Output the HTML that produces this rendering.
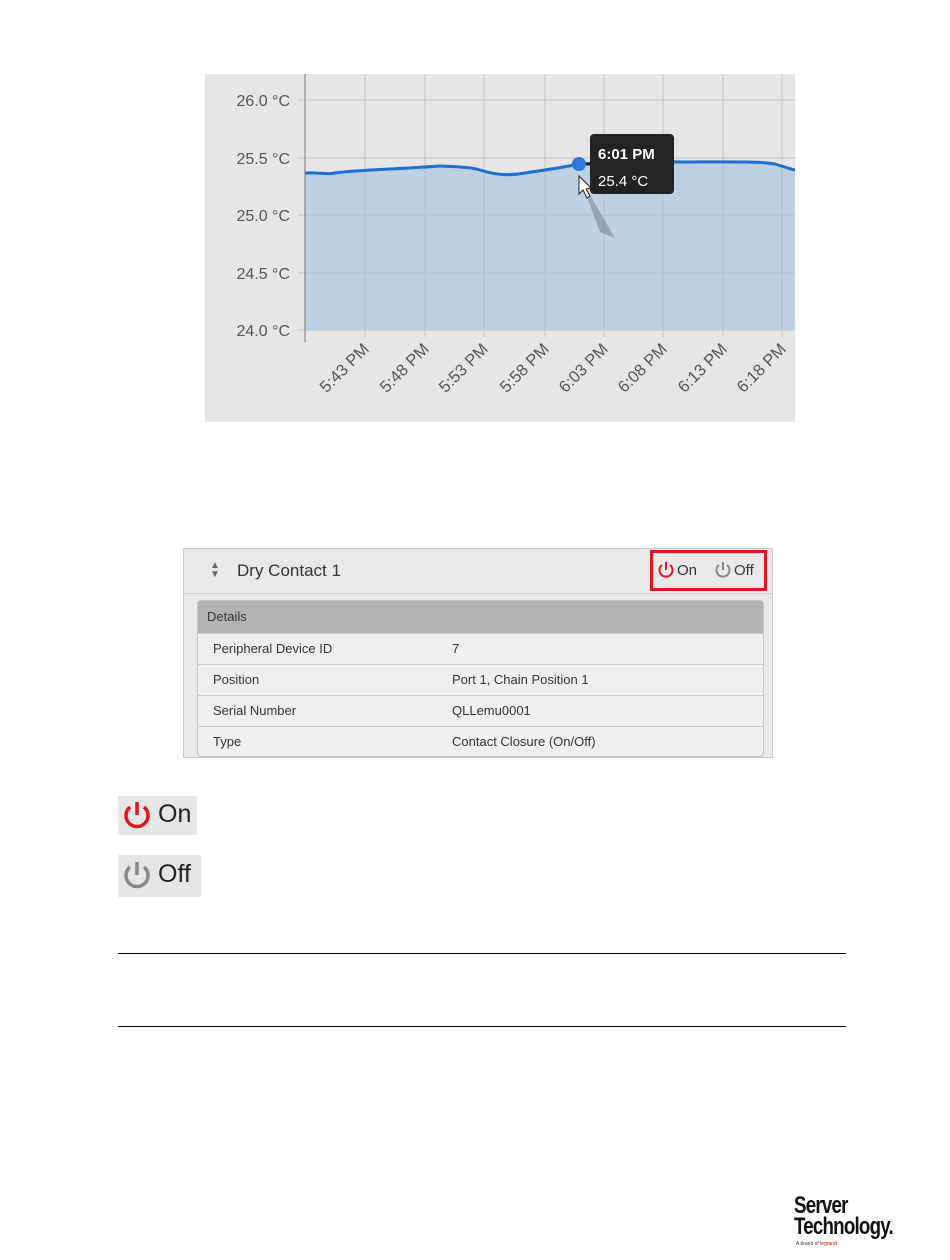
<!DOCTYPE html>
<html><head><meta charset="utf-8"><style>
body{margin:0;width:950px;height:1260px;background:#fff;position:relative;font-family:"Liberation Sans",sans-serif;overflow:hidden}
.a{position:absolute}
.row{position:absolute;left:0;right:0;height:30px;border-top:1px solid #ccc;font-size:13px;color:#333;line-height:30px}
</style></head><body>
<div class="a" style="left:205px;top:74px;width:590px;height:348px;background:#e6e6e6"></div>
<svg class="a" style="left:0;top:0" width="950" height="430">
<g stroke="#c4c4c4" stroke-width="1">
<line x1="298" y1="100" x2="795" y2="100"/><line x1="298" y1="158" x2="795" y2="158"/>
<line x1="298" y1="215" x2="795" y2="215"/><line x1="298" y1="273" x2="795" y2="273"/>
<line x1="298" y1="330" x2="795" y2="330"/>
<line x1="365" y1="74" x2="365" y2="337"/><line x1="425" y1="74" x2="425" y2="337"/>
<line x1="484" y1="74" x2="484" y2="337"/><line x1="545" y1="74" x2="545" y2="337"/>
<line x1="604" y1="74" x2="604" y2="337"/><line x1="663" y1="74" x2="663" y2="337"/>
<line x1="723" y1="74" x2="723" y2="337"/><line x1="782" y1="74" x2="782" y2="337"/>
</g>
<path d="M305,173 C320,172 325,175 335,173 C350,171 370,170 390,169 C410,168 425,167 440,166 C460,167 470,167 480,170 C495,175 510,176 525,173 C545,170 560,168 579,164 L600,163 C620,162 650,161 680,162 C720,162 760,161 775,164 C785,167 790,169 795,170 L795,330 L305,330Z" fill="#b9cde2" fill-opacity="0.9"/>
<g stroke="#a9b9cc" stroke-width="1" opacity="0.6">
<line x1="365" y1="172" x2="365" y2="330"/><line x1="425" y1="168" x2="425" y2="330"/>
<line x1="484" y1="170" x2="484" y2="330"/><line x1="545" y1="171" x2="545" y2="330"/>
<line x1="604" y1="164" x2="604" y2="330"/><line x1="663" y1="162" x2="663" y2="330"/>
<line x1="723" y1="162" x2="723" y2="330"/><line x1="782" y1="166" x2="782" y2="330"/>
<line x1="305" y1="215" x2="795" y2="215"/><line x1="305" y1="273" x2="795" y2="273"/>
</g>
<path d="M305,173 C320,172 325,175 335,173 C350,171 370,170 390,169 C410,168 425,167 440,166 C460,167 470,167 480,170 C495,175 510,176 525,173 C545,170 560,168 579,164 L600,163 C620,162 650,161 680,162 C720,162 760,161 775,164 C785,167 790,169 795,170" fill="none" stroke="#1d6fd1" stroke-width="3"/>
<line x1="305" y1="74" x2="305" y2="342" stroke="#777"/>
<line x1="579" y1="164" x2="592" y2="164" stroke="#222" stroke-width="3"/>
<circle cx="579" cy="164" r="7" fill="#2a7ad8"/>
<rect x="590" y="134" width="84" height="60" rx="4" fill="#232323"/>
<text x="598" y="159" fill="#fff" font-size="15" font-weight="bold" font-family="Liberation Sans">6:01 PM</text>
<text x="598" y="186" fill="#fff" font-size="15" font-family="Liberation Sans">25.4 °C</text>
<path d="M580,178 L600,232 L615,238 Z" fill="#555" opacity="0.35"/>
<path d="M579,176 L579,194 L583,190 L587,198 L590,196 L586,189 L591,188 Z" fill="#fff" stroke="#222" stroke-width="1"/>
<g font-size="16" fill="#555" font-family="Liberation Sans" text-anchor="end">
<text x="290" y="106">26.0 °C</text><text x="290" y="164">25.5 °C</text>
<text x="290" y="221">25.0 °C</text><text x="290" y="279">24.5 °C</text>
<text x="290" y="336">24.0 °C</text>
</g>
<g font-size="16.5" fill="#555" font-family="Liberation Sans" text-anchor="end">
<text transform="translate(370,350) rotate(-45)">5:43 PM</text>
<text transform="translate(430,350) rotate(-45)">5:48 PM</text>
<text transform="translate(489,350) rotate(-45)">5:53 PM</text>
<text transform="translate(550,350) rotate(-45)">5:58 PM</text>
<text transform="translate(609,350) rotate(-45)">6:03 PM</text>
<text transform="translate(668,350) rotate(-45)">6:08 PM</text>
<text transform="translate(728,350) rotate(-45)">6:13 PM</text>
<text transform="translate(787,350) rotate(-45)">6:18 PM</text>
</g>
</svg>

<div class="a" style="left:183px;top:548px;width:590px;height:210px;background:#e9e9e9;border:1px solid #ccc;box-sizing:border-box">
 <div class="a" style="left:0;right:0;top:0;height:44px;border-bottom:1px solid #ccc"></div>
 <div class="a" style="left:26px;top:12px;font-size:10px;color:#666;line-height:9px">▲<br>▼</div>
 <div class="a" style="left:53px;top:12px;font-size:17px;color:#333">Dry Contact 1</div>
 <div class="a" style="left:466px;top:1px;width:117px;height:41px;border:3px solid #e0151f;box-sizing:border-box"></div>
 <svg class="a" style="left:473px;top:12px" width="18" height="18"><path d="M5,4 A6.5,6.5 0 1 0 13,4" fill="none" stroke="#e0151f" stroke-width="2"/><line x1="9" y1="1" x2="9" y2="9" stroke="#e0151f" stroke-width="2"/></svg>
 <div class="a" style="left:493px;top:13px;font-size:15px;color:#333">On</div>
 <svg class="a" style="left:530px;top:12px" width="18" height="18"><path d="M5,4 A6.5,6.5 0 1 0 13,4" fill="none" stroke="#888" stroke-width="2"/><line x1="9" y1="1" x2="9" y2="9" stroke="#888" stroke-width="2"/></svg>
 <div class="a" style="left:550px;top:13px;font-size:15px;color:#333">Off</div>
 <div class="a" style="left:13px;top:51px;width:567px;height:157px;background:#efefef;border:1px solid #c4c4c4;border-radius:4px;box-sizing:border-box;overflow:hidden">
  <div class="a" style="left:0;right:0;top:0;height:32px;background:#b3b3b3;font-size:13px;color:#333;line-height:32px;padding-left:9px">Details</div>
  <div class="row" style="top:32px"><span class="a" style="left:15px">Peripheral Device ID</span><span class="a" style="left:254px">7</span></div>
  <div class="row" style="top:63px"><span class="a" style="left:15px">Position</span><span class="a" style="left:254px">Port 1, Chain Position 1</span></div>
  <div class="row" style="top:94px"><span class="a" style="left:15px">Serial Number</span><span class="a" style="left:254px">QLLemu0001</span></div>
  <div class="row" style="top:125px"><span class="a" style="left:15px">Type</span><span class="a" style="left:254px">Contact Closure (On/Off)</span></div>
 </div>
</div>

<div class="a" style="left:118px;top:796px;width:79px;height:39px;background:#e6e6e6"></div>
<svg class="a" style="left:121px;top:800px" width="32" height="32"><path d="M9,7 A11,11 0 1 0 23,7" fill="none" stroke="#e0151f" stroke-width="3.5"/><line x1="16" y1="2" x2="16" y2="15" stroke="#e0151f" stroke-width="3.5"/></svg>
<div class="a" style="left:158px;top:800px;font-size:25px;color:#222">On</div>
<div class="a" style="left:118px;top:855px;width:83px;height:42px;background:#e6e6e6"></div>
<svg class="a" style="left:121px;top:860px" width="32" height="32"><path d="M9,7 A11,11 0 1 0 23,7" fill="none" stroke="#888" stroke-width="3.5"/><line x1="16" y1="2" x2="16" y2="15" stroke="#888" stroke-width="3.5"/></svg>
<div class="a" style="left:158px;top:860px;font-size:25px;color:#222">Off</div>

<div class="a" style="left:118px;top:953px;width:728px;height:1px;background:#000"></div>
<div class="a" style="left:118px;top:1026px;width:728px;height:1px;background:#000"></div>

<div class="a" style="left:794px;top:1195px;font-size:24px;font-weight:bold;color:#111;line-height:21px;letter-spacing:-1px;transform:scaleX(0.78);transform-origin:left">Server<br>Technology.</div>
<div class="a" style="left:796px;top:1241px;font-size:5px;color:#333">A brand of <span style="color:#c00">legrand</span></div>
</body></html>
